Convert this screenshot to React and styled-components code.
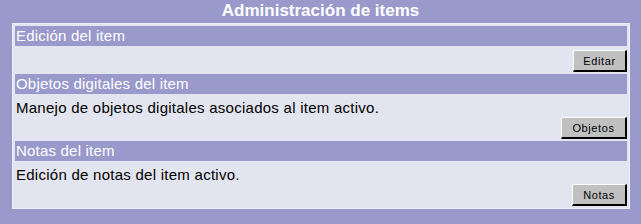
import React from "react";
import styled, { createGlobalStyle } from "styled-components";

const GlobalStyle = createGlobalStyle`
  html, body {
    margin: 0;
    padding: 0;
    background: #9999cc;
  }
  body {
    font-family: "Liberation Sans", Arial, sans-serif;
  }
`;

const Page = styled.div`
  width: 641px;
  height: 224px;
  background: #9999cc;
  overflow: hidden;
`;

const Title = styled.h1`
  margin: 0;
  height: 23px;
  line-height: 22px;
  text-align: center;
  font-size: 17px;
  font-weight: bold;
  color: #ffffff;
`;

const Panel = styled.div`
  box-sizing: border-box;
  width: 618px;
  margin-left: 12px;
  border: 1px solid #eef0f8;
  background: #e2e5ef;
  padding: 2px;
  display: flex;
  flex-direction: column;
  gap: 2px;
`;

const Header = styled.div`
  height: 20px;
  line-height: 20px;
  padding-left: 1px;
  background: #9999cc;
  color: #ffffff;
  font-size: 15px;
  letter-spacing: 0.2px;
`;

const Body = styled.div`
  padding: 2px 0 0 1px;
  display: flex;
  flex-direction: column;
`;

const Desc = styled.div`
  font-size: 15px;
  line-height: 19px;
  letter-spacing: 0.26px;
  color: #000000;
`;

const Actions = styled.div`
  display: flex;
  justify-content: flex-end;
`;

const Button = styled.button`
  box-sizing: border-box;
  height: 22px;
  min-width: ${(props) => props.$width || 54}px;
  padding: 0 8px;
  background: #c0c0c0;
  border-style: solid;
  border-width: 1px 2px 2px 1px;
  border-color: #ffffff #000000 #000000 #ffffff;
  font-family: "Liberation Sans", Arial, sans-serif;
  font-size: 11px;
  letter-spacing: 0.6px;
  color: #000000;
  cursor: pointer;
`;

const sections = [
  { title: "Edición del item", desc: null, button: "Editar", width: 54 },
  {
    title: "Objetos digitales del item",
    desc: "Manejo de objetos digitales asociados al item activo.",
    button: "Objetos",
    width: 66,
  },
  {
    title: "Notas del item",
    desc: "Edición de notas del item activo.",
    button: "Notas",
    width: 55,
  },
];

export default function App() {
  return (
    <Page>
      <GlobalStyle />
      <Title>Administración de items</Title>
      <Panel>
        {sections.map((s) => (
          <React.Fragment key={s.title}>
            <Header>{s.title}</Header>
            <Body>
              {s.desc && <Desc>{s.desc}</Desc>}
              <Actions>
                <Button $width={s.width}>{s.button}</Button>
              </Actions>
            </Body>
          </React.Fragment>
        ))}
      </Panel>
    </Page>
  );
}
